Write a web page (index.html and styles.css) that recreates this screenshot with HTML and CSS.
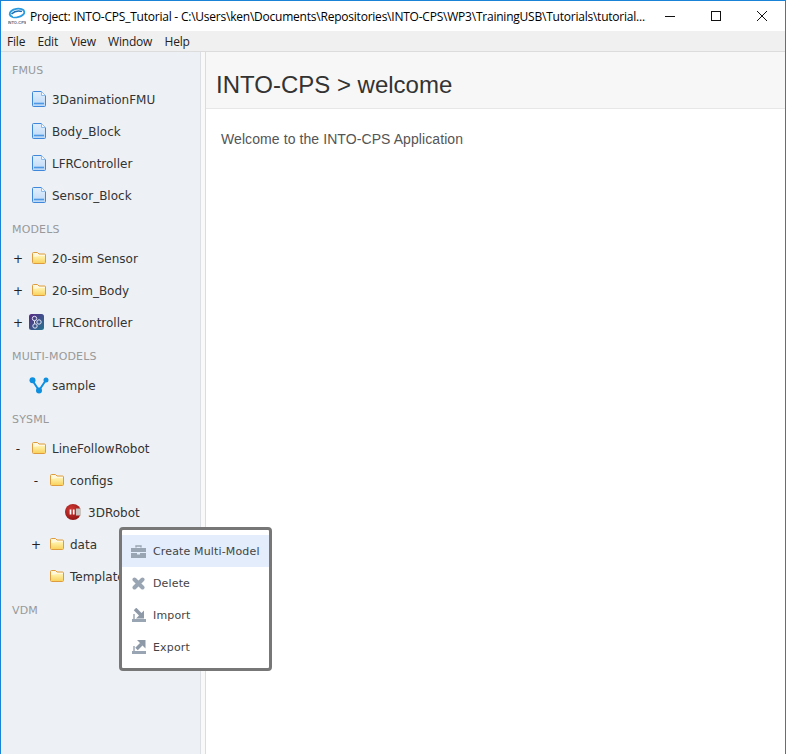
FILE: index.html
```html
<!DOCTYPE html>
<html lang="en">
<head>
    <meta charset="UTF-8">
    <title>INTO-CPS Application</title>
    <link rel="stylesheet" href="styles.css">
</head>
<body>
    <svg class="sprites" width="0" height="0">
        <defs>
            <linearGradient id="page-fill" x1="0" y1="0" x2="0" y2="1">
                <stop offset="0" stop-color="#e2effc"/>
                <stop offset="1" stop-color="#bcd8f6"/>
            </linearGradient>
            <linearGradient id="folder-fill" x1="0" y1="0" x2="0" y2="1">
                <stop offset="0" stop-color="#fff3b0"/>
                <stop offset="1" stop-color="#f9d35e"/>
            </linearGradient>
            <linearGradient id="sim-fill" x1="0" y1="0" x2="1" y2="1">
                <stop offset="0" stop-color="#5b2a86"/>
                <stop offset="1" stop-color="#24758f"/>
            </linearGradient>
            <radialGradient id="robot-fill" cx=".4" cy=".35" r=".7">
                <stop offset="0" stop-color="#d23a34"/>
                <stop offset="1" stop-color="#8f1414"/>
            </radialGradient>
            <symbol id="icon-page" viewBox="0 0 14 16">
                <path d="M1.5 .5H9.5L13.5 4.5V14.5Q13.5 15.5 12.5 15.5H1.5Q.5 15.5 .5 14.5V1.5Q.5 .5 1.5 .5Z" fill="url(#page-fill)" stroke="#3f87da"/>
                <path d="M9.5 .5V4.5H13.5" fill="#f4f9ff" stroke="#8dbbea"/>
                <path d="M2 12.5H12" stroke="#4f98e4" stroke-width="1.6"/>
            </symbol>
            <symbol id="icon-folder" viewBox="0 0 14 12">
                <path d="M.5 1.5Q.5 .5 1.5 .5H5.5L7 2H12.5Q13.5 2 13.5 3V10.5Q13.5 11.5 12.5 11.5H1.5Q.5 11.5 .5 10.5Z" fill="#fff8dc" stroke="#df9c3e"/>
                <path d="M1 5L7 4H13V11H1Z" fill="url(#folder-fill)"/>
            </symbol>
        </defs>
    </svg>

    <div class="window">
        <div class="titlebar">
            <svg class="app-logo" width="18" height="18" viewBox="0 0 18 18">
                <ellipse cx="9" cy="6" rx="7.4" ry="4.2" fill="none" stroke="#2b9be0" stroke-width="1.9" transform="rotate(-10 9 6)"/>
                <path d="M3.5 7Q8 2.5 14 4.5" fill="none" stroke="#1d6fb5" stroke-width="1.5"/>
                <path d="M5 9.5Q10 9 15 5" fill="none" stroke="#fff" stroke-width="1.2"/>
                <text x="9" y="16.5" class="logo-text" text-anchor="middle">INTO-CPS</text>
            </svg>
            <div class="title-text">Project: INTO-CPS_Tutorial - C:\Users\ken\Documents\Repositories\INTO-CPS\WP3\TrainingUSB\Tutorials\tutorial...</div>
            <div class="win-btn">
                <svg width="10" height="10" viewBox="0 0 10 10"><path d="M0 5.5H10" stroke="#111"/></svg>
            </div>
            <div class="win-btn">
                <svg width="10" height="10" viewBox="0 0 10 10"><rect x=".5" y=".5" width="9" height="9" fill="none" stroke="#111"/></svg>
            </div>
            <div class="win-btn">
                <svg width="10" height="10" viewBox="0 0 10 10"><path d="M0 0L10 10M10 0L0 10" stroke="#111"/></svg>
            </div>
        </div>

        <div class="menubar">
            <span class="menu-item">File</span>
            <span class="menu-item">Edit</span>
            <span class="menu-item">View</span>
            <span class="menu-item">Window</span>
            <span class="menu-item">Help</span>
        </div>

        <div class="main">
            <div class="sidebar">
                <div class="section">FMUS</div>
                <div class="row"><span class="twisty"></span><span class="icon"><svg width="14" height="16"><use href="#icon-page"/></svg></span><span class="label">3DanimationFMU</span></div>
                <div class="row"><span class="twisty"></span><span class="icon"><svg width="14" height="16"><use href="#icon-page"/></svg></span><span class="label">Body_Block</span></div>
                <div class="row"><span class="twisty"></span><span class="icon"><svg width="14" height="16"><use href="#icon-page"/></svg></span><span class="label">LFRController</span></div>
                <div class="row"><span class="twisty"></span><span class="icon"><svg width="14" height="16"><use href="#icon-page"/></svg></span><span class="label">Sensor_Block</span></div>

                <div class="section">MODELS</div>
                <div class="row"><span class="twisty">+</span><span class="icon"><svg width="14" height="12"><use href="#icon-folder"/></svg></span><span class="label">20-sim Sensor</span></div>
                <div class="row"><span class="twisty">+</span><span class="icon"><svg width="14" height="12"><use href="#icon-folder"/></svg></span><span class="label">20-sim_Body</span></div>
                <div class="row">
                    <span class="twisty">+</span>
                    <span class="icon icon-start">
                        <svg width="15" height="16" viewBox="0 0 15 16">
                            <rect width="15" height="16" rx="2.5" fill="url(#sim-fill)"/>
                            <g fill="none" stroke="#e4e6f4" stroke-width="1">
                                <circle cx="5.5" cy="4.5" r="2.2"/>
                                <circle cx="10" cy="8" r="2.2"/>
                                <circle cx="6" cy="12" r="2.2"/>
                                <path d="M5.5 6.7V9.8"/>
                            </g>
                        </svg>
                    </span>
                    <span class="label">LFRController</span>
                </div>

                <div class="section">MULTI-MODELS</div>
                <div class="row">
                    <span class="twisty"></span>
                    <span class="icon">
                        <svg width="20" height="17" viewBox="0 0 20 17">
                            <path d="M3.5 3.5L10 13.5L17 3" fill="none" stroke="#0f8fe0" stroke-width="2"/>
                            <circle cx="3.5" cy="3.2" r="3" fill="#0f8fe0"/>
                            <circle cx="10" cy="13.5" r="3" fill="#0f8fe0"/>
                            <circle cx="17" cy="3" r="2.5" fill="#0f8fe0"/>
                        </svg>
                    </span>
                    <span class="label">sample</span>
                </div>

                <div class="section">SYSML</div>
                <div class="row"><span class="twisty">-</span><span class="icon"><svg width="14" height="12"><use href="#icon-folder"/></svg></span><span class="label">LineFollowRobot</span></div>
                <div class="row level-2"><span class="twisty">-</span><span class="icon"><svg width="14" height="12"><use href="#icon-folder"/></svg></span><span class="label">configs</span></div>
                <div class="row level-3">
                    <span class="twisty"></span>
                    <span class="icon icon-start">
                        <svg width="16" height="16" viewBox="0 0 16 16">
                            <circle cx="8" cy="8" r="8" fill="url(#robot-fill)"/>
                            <path d="M11 4.5H16V11.5H11Z" fill="#c9c4c0"/>
                            <path d="M5.5 5.5V10.5M8.7 5.5V10.5" stroke="#fff" stroke-width="1.7"/>
                        </svg>
                    </span>
                    <span class="label">3DRobot</span>
                </div>
                <div class="row level-2"><span class="twisty">+</span><span class="icon"><svg width="14" height="12"><use href="#icon-folder"/></svg></span><span class="label">data</span></div>
                <div class="row level-2"><span class="twisty"></span><span class="icon"><svg width="14" height="12"><use href="#icon-folder"/></svg></span><span class="label">Templates</span></div>

                <div class="section">VDM</div>
            </div>

            <div class="splitter"></div>

            <div class="content">
                <div class="page-header"><h1>INTO-CPS &gt; welcome</h1></div>
                <p class="page-body">Welcome to the INTO-CPS Application</p>
            </div>
        </div>

        <div class="context-menu">
            <div class="ctx-item selected">
                <span class="ctx-icon">
                    <svg width="15" height="13" viewBox="0 0 15 13">
                        <path d="M5 2.5V1H10V2.5" fill="none" stroke="#9aa5b3" stroke-width="1.4"/>
                        <path d="M0 3H15V7H0ZM0 8H6V9.5H9V8H15V13H0Z" fill="#9aa5b3"/>
                    </svg>
                </span>
                Create Multi-Model
            </div>
            <div class="ctx-item">
                <span class="ctx-icon">
                    <svg width="13" height="13" viewBox="0 0 13 13"><path d="M2.5 2.5L10.5 10.5M10.5 2.5L2.5 10.5" stroke="#9aa5b3" stroke-width="4" stroke-linecap="round"/></svg>
                </span>
                Delete
            </div>
            <div class="ctx-item">
                <span class="ctx-icon">
                    <svg width="14" height="14" viewBox="0 0 14 14">
                        <path d="M0 11H14V14H0Z" fill="#9aa5b3"/>
                        <path d="M1 6H3V11H1Z" fill="#b5bdc8"/>
                        <path d="M12 2.5V10.5H4Z" fill="#8e99a8"/>
                        <path d="M3 1L9 7" stroke="#8e99a8" stroke-width="3.6"/>
                    </svg>
                </span>
                Import
            </div>
            <div class="ctx-item">
                <span class="ctx-icon">
                    <svg width="14" height="14" viewBox="0 0 14 14">
                        <path d="M0 11H14V14H0Z" fill="#9aa5b3"/>
                        <path d="M1 6H3V11H1Z" fill="#b5bdc8"/>
                        <path d="M5 0H13.5V8.5Z" fill="#8e99a8"/>
                        <path d="M9.5 4L4.5 9" stroke="#8e99a8" stroke-width="3.6"/>
                    </svg>
                </span>
                Export
            </div>
        </div>
    </div>
</body>
</html>
```

FILE: styles.css
```css
html, body {
    margin: 0;
    height: 100%;
    overflow: hidden;
}
.sprites {
    position: absolute;
}
.window {
    position: relative;
    box-sizing: border-box;
    height: 100vh;
    display: flex;
    flex-direction: column;
    background-color: #fff;
    border: 1px solid #1883d7;
    border-bottom: 0;
}
.titlebar {
    height: 30px;
    display: flex;
    align-items: center;
    flex-shrink: 0;
    padding-left: 7px;
    font-family: "Open Sans", sans-serif;
    font-size: 12px;
    color: #000;
}
.app-logo {
    margin-right: 4px;
}
.logo-text {
    font-family: "Liberation Sans", sans-serif;
    font-size: 4px;
    font-weight: 700;
    fill: #667;
}
.title-text {
    flex: 1;
    letter-spacing: -0.225px;
    white-space: nowrap;
    overflow: hidden;
}
.win-btn {
    width: 46px;
    height: 30px;
    display: flex;
    align-items: center;
    justify-content: center;
}
.menubar {
    height: 20px;
    display: flex;
    align-items: center;
    flex-shrink: 0;
    padding-left: 6px;
    background-color: #f0f0f0;
    border-bottom: 1px solid #dcdcdc;
    font-family: "Open Sans", sans-serif;
    font-size: 12px;
    letter-spacing: -0.2px;
    color: #222;
}
.menu-item {
    margin-right: 12.3px;
}
.main {
    flex: 1;
    display: flex;
    min-height: 0;
}
.sidebar {
    width: 199px;
    flex-shrink: 0;
    background-color: #edf1f6;
    border-right: 1px solid #dcdfe3;
    font-family: "DejaVu Sans", sans-serif;
    font-size: 12px;
    color: #333;
}
.section {
    box-sizing: border-box;
    height: 31px;
    padding: 13px 0 0 11px;
    font-size: 11px;
    line-height: 12px;
    letter-spacing: 0.15px;
    color: #999;
}
.row {
    height: 32px;
    display: flex;
    align-items: center;
    padding-left: 10px;
}
.level-2 {
    padding-left: 28px;
}
.level-3 {
    padding-left: 46px;
}
.twisty {
    width: 14px;
    margin-right: 4px;
    padding-top: 2px;
    text-align: center;
    color: #222;
}
.icon {
    width: 20px;
    margin-right: 3px;
    display: flex;
    justify-content: center;
}
.icon-start {
    justify-content: flex-start;
}
.label {
    padding-top: 2px;
}
.splitter {
    width: 4px;
    flex-shrink: 0;
    background-color: #f9f9f9;
}
.content {
    flex: 1;
    border-left: 1px solid #dcdcdc;
    font-family: "Liberation Sans", sans-serif;
}
.page-header {
    height: 56px;
    display: flex;
    align-items: center;
    padding-left: 10px;
    background-color: #f7f7f7;
    border-bottom: 1px solid #e7e7e7;
}
.page-header h1 {
    margin: 10px 0 0;
    font-size: 24px;
    font-weight: 400;
    color: #333;
}
.page-body {
    margin: 22px 0 0 15px;
    font-size: 14px;
    letter-spacing: 0.085px;
    color: #555;
}
.context-menu {
    position: absolute;
    left: 118px;
    top: 526px;
    width: 147px;
    padding: 5px 0;
    background-color: #fff;
    border: 3px solid #777;
    border-radius: 4px;
    font-family: "DejaVu Sans", sans-serif;
    font-size: 11px;
    letter-spacing: 0.15px;
    color: #444;
}
.ctx-item {
    height: 32px;
    display: flex;
    align-items: center;
    padding-left: 9px;
}
.ctx-item.selected {
    background-color: #e3edfb;
}
.ctx-icon {
    width: 15px;
    margin-right: 7px;
    display: flex;
    justify-content: center;
}
```
